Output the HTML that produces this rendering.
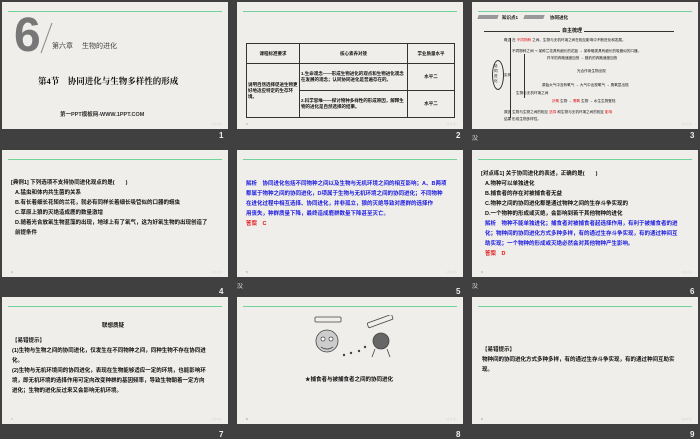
<!DOCTYPE html><html><head><meta charset="utf-8"><style>
body{margin:0;width:700px;height:438px;background:#404040;position:relative;overflow:hidden;font-family:"Liberation Sans","Noto Sans CJK SC",sans-serif}
.s{position:absolute;width:226px;height:127px;background:#f0eeeb;overflow:hidden}
.g{position:absolute;left:6px;right:6px;top:9px;height:1px;background:#6fd39a}
.n{position:absolute;color:#eee;font-size:8px;font-weight:bold}
.t{position:absolute;font-size:5.5px;font-weight:bold;line-height:10px;color:#111;white-space:nowrap}
.b{color:#1a1ae0}.r{color:#e01010}
.pg{position:absolute;bottom:3px;left:9px;font-size:3px;color:#888}
.nav{position:absolute;bottom:3px;right:6px;font-size:3px;color:#999}
table{border-collapse:collapse;position:absolute;font-size:4.5px;font-weight:bold;color:#111}
td{border:0.8px solid #333;padding:1px}
.m{font-size:3.6px;font-weight:normal}
</style></head><body>
<div class="s" style="left:2px;top:2px">
<div class="g"></div>
<div style="position:absolute;left:12px;top:10px;font-size:48px;font-weight:bold;color:#777;line-height:48px">6</div>
<div style="position:absolute;left:44px;top:20px;width:1px;height:32px;background:#888;transform:rotate(20deg)"></div>
<div class="t" style="left:50px;top:40px;font-size:7px;font-weight:normal;color:#444">第六章　 生物的进化</div>
<div class="t" style="left:36px;top:74px;font-size:8.5px;font-family:'Liberation Serif','Noto Serif CJK SC',serif">第4节　协同进化与生物多样性的形成</div>
<div class="t" style="left:58px;top:108px;font-size:5.5px;color:#333">第一PPT模板网-WWW.1PPT.COM</div>
<div class="nav">◁ ▷ ▷</div></div>
<div class="n" style="left:219px;top:131px">1</div>
<div class="s" style="left:237px;top:2px">
<div class="g"></div>
<table style="left:9px;top:41px;width:209px;height:75px"><tr style="height:20px"><td style="width:50px;text-align:center">课程标准要求</td><td style="text-align:center">核心素养对接</td><td style="width:44px;text-align:center">学业质量水平</td></tr>
<tr><td rowspan="2">说明自然选择促进生物更好地适应特定的生存环境。</td><td>1.生命观念——形成生物进化的观点和生物进化观念在发展的观念；认同协同进化是普遍存在的。</td><td style="text-align:center">水平二</td></tr>
<tr><td>2.科学思维——探讨物种多样性的形成原因，解释生物的进化是自然选择的结果。</td><td style="text-align:center">水平二</td></tr></table>
<div class="pg">2</div><div class="nav">◁ ▷ ▷</div></div>
<div class="n" style="left:456px;top:131px">2</div>
<div class="s" style="left:472px;top:2px">
<div class="g"></div>
<div style="position:absolute;left:6px;top:13px;width:20px;height:4px;background:#999;transform:skewX(-20deg)"></div>
<div class="t" style="left:30px;top:11px;font-size:4.5px">知识点1</div>
<div style="position:absolute;left:52px;top:13px;width:20px;height:4px;background:#999;transform:skewX(-20deg)"></div>
<div class="t" style="left:78px;top:11px;font-size:4.5px">协同进化</div>
<div style="position:absolute;left:12px;top:29px;width:190px;height:0.7px;background:#333"></div>
<div class="t" style="left:88px;top:24px;font-size:5px;background:#f0eeeb;padding:0 2px">自主梳理</div>
<div style="position:absolute;left:20px;top:58px;width:10px;height:28px;border:0.7px solid #333;border-radius:50%"></div>
<div class="t m" style="left:22px;top:62px;line-height:5px;white-space:normal;width:5px">协同进化</div>
<div style="position:absolute;left:38px;top:36px;width:0.7px;height:80px;background:#333"></div>
<div style="position:absolute;left:52px;top:52px;width:0.7px;height:44px;background:#333"></div>
<div class="t m" style="left:32px;top:33px">概念 在 <span class="r">不同物种</span> 之间、生物与无机环境之间在相互影响中不断进化和发展。</div>
<div class="t m" style="left:40px;top:44px">不同物种之间 ⊸ 某种兰花具有细长的花距 → 某种蛾类具有细长的吸管似的口器。</div>
<div class="t m" style="left:75px;top:51px">羚羊的奔跑速度加快 → 猎豹的奔跑速度加快</div>
<div class="t m" style="left:32px;top:68px">实例</div>
<div class="t m" style="left:105px;top:64px">光合作用生物出现</div>
<div class="t m" style="left:70px;top:78px">原始大气中没有氧气 → 大气中出现氧气 → 臭氧层出现</div>
<div class="t m" style="left:44px;top:86px">生物与无机环境之间</div>
<div class="t m" style="left:80px;top:94px"><span class="r">厌氧</span> 生物 → <span class="r">需氧</span> 生物 → 水生生物登陆</div>
<div class="t m" style="left:32px;top:105px">原因 生物与生物之间的相互 <span class="r">选择</span> 和生物与无机环境之间的相互 <span class="r">影响</span></div>
<div class="t m" style="left:32px;top:112px">结果 形成生物多样性。</div>
<div class="nav">◁ ▷ ▷</div></div>
<div class="n" style="left:690px;top:131px">3</div>
<div class="s" style="left:2px;top:150px">
<div class="g"></div>
<div class="t" style="left:9px;top:28px">[典例1] 下列选项不支持协同进化观点的是(　　)</div>
<div class="t" style="left:13px;top:38px">A.猛虫和体内共生菌的关系</div>
<div class="t" style="left:13px;top:48px">B.有长着细长花矩的兰花，就必有同样长着细长吸管似的口器的蛾虫</div>
<div class="t" style="left:13px;top:58px">C.草原上狼的灭绝造成鹿的数量激增</div>
<div class="t" style="left:13px;top:68px">D.随着光合放氧生物蓝藻的出现，地球上有了氧气，这为好氧生物的出现创造了</div>
<div class="t" style="left:13px;top:78px">前提条件</div>
<div class="pg">4</div><div class="nav">◁ ▷ ▷</div></div>
<div class="n" style="left:219px;top:287px">4</div>
<div class="s" style="left:237px;top:150px">
<div class="g"></div>
<div class="t b" style="left:9px;top:29px">解析　协同进化包括不同物种之间以及生物与无机环境之间的相互影响；A、B两项</div>
<div class="t b" style="left:9px;top:39px">都属于物种之间的协同进化，D项属于生物与无机环境之间的协同进化；不同物种</div>
<div class="t b" style="left:9px;top:49px">在进化过程中相互选择、协同进化，并非孤立，狼的灭绝导致对鹿群的选择作</div>
<div class="t b" style="left:9px;top:59px">用丧失，种群质量下降，最终造成鹿群数量下降甚至灭亡。</div>
<div class="t r" style="left:9px;top:69px">答案　C</div>
<div class="pg">5</div><div class="nav">◁ ▷ ▷</div></div>
<div class="n" style="left:456px;top:287px">5</div>
<div class="s" style="left:472px;top:150px">
<div class="g"></div>
<div class="t" style="left:9px;top:19px">[对点练1] 关于协同进化的表述，正确的是(　　)</div>
<div class="t" style="left:13px;top:29px">A.物种可以单独进化</div>
<div class="t" style="left:13px;top:39px">B.捕食者的存在对被捕食者无益</div>
<div class="t" style="left:13px;top:49px">C.物种之间的协同进化都是通过物种之间的生存斗争实现的</div>
<div class="t" style="left:13px;top:59px">D.一个物种的形成或灭绝，会影响到若干其他物种的进化</div>
<div class="t b" style="left:13px;top:69px">解析　物种不能单独进化；捕食者对被捕食者起选择作用，有利于被捕食者的进</div>
<div class="t b" style="left:13px;top:79px">化；物种间的协同进化方式多种多样，有的通过生存斗争实现，有的通过种间互</div>
<div class="t b" style="left:13px;top:89px">助实现；一个物种的形成或灭绝必然会对其他物种产生影响。</div>
<div class="t r" style="left:13px;top:99px">答案　D</div>
<div class="pg">6</div><div class="nav">◁ ▷ ▷</div></div>
<div class="n" style="left:690px;top:287px">6</div>
<div class="s" style="left:2px;top:297px">
<div class="g"></div>
<div class="t" style="left:100px;top:24px">联想质疑</div>
<div class="t" style="left:10px;top:39px">【易错提示】</div>
<div class="t" style="left:10px;top:49px">(1)生物与生物之间的协同进化，仅发生在不同物种之间，同种生物不存在协同进</div>
<div class="t" style="left:10px;top:59px">化。</div>
<div class="t" style="left:10px;top:69px">(2)生物与无机环境间的协同进化，表现在生物能够适应一定的环境，也能影响环</div>
<div class="t" style="left:10px;top:79px">境，即无机环境的选择作用可定向改变种群的基因频率，导致生物朝着一定方向</div>
<div class="t" style="left:10px;top:89px">进化；生物的进化反过来又会影响无机环境。</div>
<div class="pg">7</div><div class="nav">◁ ▷ ▷</div></div>
<div class="n" style="left:219px;top:430px">7</div>
<div class="s" style="left:237px;top:297px">
<div class="g"></div>
<svg style="position:absolute;left:72px;top:18px" width="90" height="50" viewBox="0 0 90 50" fill="none" stroke="#444" stroke-width="0.8">
<rect x="6" y="2" width="26" height="5" rx="1"/><circle cx="18" cy="26" r="11" fill="#ccc"/><circle cx="14" cy="24" r="2" fill="#fff"/><circle cx="22" cy="24" r="2" fill="#fff"/><path d="M12 32q6 4 12 0"/>
<rect x="58" y="4" width="26" height="5" rx="1" transform="rotate(-20 70 6)"/><circle cx="72" cy="26" r="8" fill="#666"/><path d="M66 34l-3 8M78 34l3 8"/>
<circle cx="35" cy="40" r="0.8" fill="#333"/><circle cx="42" cy="38" r="0.8" fill="#333"/><circle cx="50" cy="36" r="0.8" fill="#333"/><circle cx="56" cy="32" r="0.8" fill="#333"/></svg>
<div class="t" style="left:68px;top:78px">★捕食者与被捕食者之间的协同进化</div>
<div class="pg">8</div><div class="nav">◁ ▷ ▷</div></div>
<div class="n" style="left:456px;top:430px">8</div>
<div class="s" style="left:472px;top:297px">
<div class="g"></div>
<div class="t" style="left:10px;top:48px">【易错提示】</div>
<div class="t" style="left:10px;top:58px">物种间的协同进化方式多种多样，有的通过生存斗争实现，有的通过种间互助实</div>
<div class="t" style="left:10px;top:68px">现。</div>
<div class="pg">9</div><div class="nav">◁ ▷ ▷</div></div>
<div class="n" style="left:690px;top:430px">9</div>
<div class="n" style="left:472px;top:133px;font-weight:normal;font-size:6px">㳇</div>
<div class="n" style="left:237px;top:281px;font-weight:normal;font-size:6px">㳇</div>
<div class="n" style="left:472px;top:281px;font-weight:normal;font-size:6px">㳇</div>
</body></html>
